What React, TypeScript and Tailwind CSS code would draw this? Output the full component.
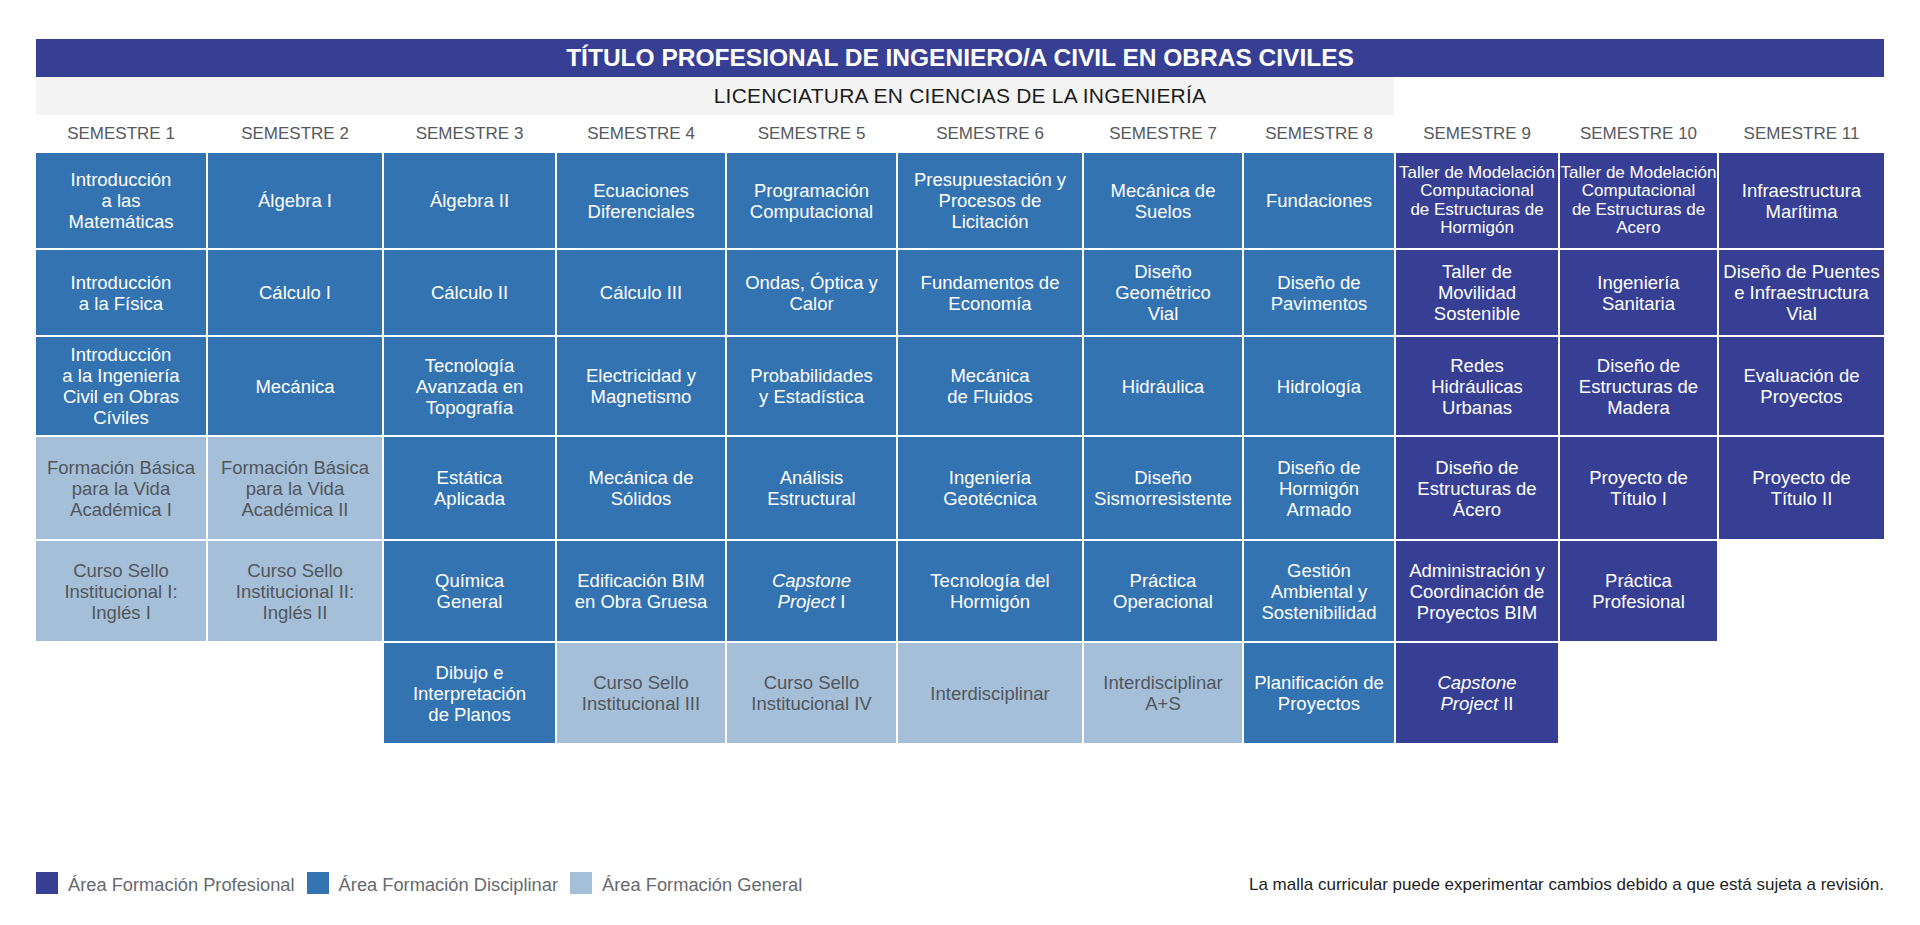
import React from 'react';

type Area = 'P' | 'D' | 'G';

type Course = {
  area: Area;
  lines: React.ReactNode[];
  small?: boolean;
} | null;

const AREA_BG: Record<Area, string> = {
  P: 'bg-[#363f94] text-white',
  D: 'bg-[#3373b2] text-white',
  G: 'bg-[#a5bfd8] text-[#51565c]',
};

const COLS =
  'grid-cols-[170px_174px_171px_168px_169px_184px_158px_150px_162px_157px_165px]';

const SEMESTERS = Array.from({ length: 11 }, (_, i) => `SEMESTRE ${i + 1}`);

const c = (area: Area, ...lines: React.ReactNode[]): Course => ({ area, lines });

// malla por filas, una entrada por semestre (null = celda vacía)
const ROWS: Course[][] = [
  [
    c('D', 'Introducción', 'a las', 'Matemáticas'),
    c('D', 'Álgebra I'),
    c('D', 'Álgebra II'),
    c('D', 'Ecuaciones', 'Diferenciales'),
    c('D', 'Programación', 'Computacional'),
    c('D', 'Presupuestación y', 'Procesos de', 'Licitación'),
    c('D', 'Mecánica de', 'Suelos'),
    c('D', 'Fundaciones'),
    { area: 'P', small: true, lines: ['Taller de Modelación', 'Computacional', 'de Estructuras de', 'Hormigón'] },
    { area: 'P', small: true, lines: ['Taller de Modelación', 'Computacional', 'de Estructuras de', 'Acero'] },
    c('P', 'Infraestructura', 'Marítima'),
  ],
  [
    c('D', 'Introducción', 'a la Física'),
    c('D', 'Cálculo I'),
    c('D', 'Cálculo II'),
    c('D', 'Cálculo III'),
    c('D', 'Ondas, Óptica y', 'Calor'),
    c('D', 'Fundamentos de', 'Economía'),
    c('D', 'Diseño', 'Geométrico', 'Vial'),
    c('D', 'Diseño de', 'Pavimentos'),
    c('P', 'Taller de', 'Movilidad', 'Sostenible'),
    c('P', 'Ingeniería', 'Sanitaria'),
    c('P', 'Diseño de Puentes', 'e Infraestructura', 'Vial'),
  ],
  [
    c('D', 'Introducción', 'a la Ingeniería', 'Civil en Obras', 'Cíviles'),
    c('D', 'Mecánica'),
    c('D', 'Tecnología', 'Avanzada en', 'Topografía'),
    c('D', 'Electricidad y', 'Magnetismo'),
    c('D', 'Probabilidades', 'y Estadística'),
    c('D', 'Mecánica', 'de Fluidos'),
    c('D', 'Hidráulica'),
    c('D', 'Hidrología'),
    c('P', 'Redes', 'Hidráulicas', 'Urbanas'),
    c('P', 'Diseño de', 'Estructuras de', 'Madera'),
    c('P', 'Evaluación de', 'Proyectos'),
  ],
  [
    c('G', 'Formación Básica', 'para la Vida', 'Académica I'),
    c('G', 'Formación Básica', 'para la Vida', 'Académica II'),
    c('D', 'Estática', 'Aplicada'),
    c('D', 'Mecánica de', 'Sólidos'),
    c('D', 'Análisis', 'Estructural'),
    c('D', 'Ingeniería', 'Geotécnica'),
    c('D', 'Diseño', 'Sismorresistente'),
    c('D', 'Diseño de', 'Hormigón', 'Armado'),
    c('P', 'Diseño de', 'Estructuras de', 'Ácero'),
    c('P', 'Proyecto de', 'Título I'),
    c('P', 'Proyecto de', 'Título II'),
  ],
  [
    c('G', 'Curso Sello', 'Institucional I:', 'Inglés I'),
    c('G', 'Curso Sello', 'Institucional II:', 'Inglés II'),
    c('D', 'Química', 'General'),
    c('D', 'Edificación BIM', 'en Obra Gruesa'),
    c('D', <em>Capstone</em>, <><em>Project</em> I</>),
    c('D', 'Tecnología del', 'Hormigón'),
    c('D', 'Práctica', 'Operacional'),
    c('D', 'Gestión', 'Ambiental y', 'Sostenibilidad'),
    c('P', 'Administración y', 'Coordinación de', 'Proyectos BIM'),
    c('P', 'Práctica', 'Profesional'),
    null,
  ],
  [
    null,
    null,
    c('D', 'Dibujo e', 'Interpretación', 'de Planos'),
    c('G', 'Curso Sello', 'Institucional III'),
    c('G', 'Curso Sello', 'Institucional IV'),
    c('G', 'Interdisciplinar'),
    c('G', 'Interdisciplinar', 'A+S'),
    c('D', 'Planificación de', 'Proyectos'),
    c('P', <em>Capstone</em>, <><em>Project</em> II</>),
    null,
    null,
  ],
];

function CourseCell({ course }: { course: Course }) {
  if (!course) return <div />;
  return (
    <div
      className={`flex flex-col items-center justify-center text-center whitespace-nowrap ${AREA_BG[course.area]} ${
        course.small ? 'text-[17px] leading-[18.5px]' : 'text-[18.5px] leading-[21px]'
      }`}
    >
      {course.lines.map((line, i) => (
        <span key={i}>{line}</span>
      ))}
    </div>
  );
}

function LegendItem({ color, label }: { color: string; label: string }) {
  return (
    <div className="flex items-center gap-[10px]">
      <span className={`w-[22px] h-[22px] ${color}`} />
      <span className="text-[18.3px] text-[#666a6e] pt-[4px]">{label}</span>
    </div>
  );
}

export default function App() {
  return (
    <div className="w-[1920px] h-[925px] bg-white px-[36px] pt-[39px] font-['Liberation_Sans',Arial,sans-serif]">
      {/* Título */}
      <div className="h-[38px] bg-[#363f94] flex items-center justify-center text-white font-bold text-[24.5px]">
        TÍTULO PROFESIONAL DE INGENIERO/A CIVIL EN OBRAS CIVILES
      </div>

      {/* Licenciatura */}
      <div className={`grid ${COLS} gap-x-[2px] h-[38px]`}>
        <div className="col-start-1 col-end-9 row-start-1 bg-[#f4f4f4]" />
        <div className="col-start-1 col-end-12 row-start-1 flex items-center justify-center text-[21px] tracking-[0.01em] text-[#1c1c1c]">
          LICENCIATURA EN CIENCIAS DE LA INGENIERÍA
        </div>
      </div>

      {/* Semestres */}
      <div className={`grid ${COLS} gap-x-[2px] h-[38px]`}>
        {SEMESTERS.map((s) => (
          <div key={s} className="flex items-center justify-center text-[17px] text-[#55585c]">
            {s}
          </div>
        ))}
      </div>

      {/* Malla */}
      <div className={`grid ${COLS} grid-rows-[95px_85px_98px_102px_100px_100px] gap-[2px]`}>
        {ROWS.flatMap((row, r) => row.map((course, i) => <CourseCell key={`${r}-${i}`} course={course} />))}
      </div>

      {/* Leyenda */}
      <div className="mt-[124px] flex items-center justify-between">
        <div className="flex items-center gap-[12px]">
          <LegendItem color="bg-[#363f94]" label="Área Formación Profesional" />
          <LegendItem color="bg-[#3373b2]" label="Área Formación Disciplinar" />
          <LegendItem color="bg-[#a5bfd8]" label="Área Formación General" />
        </div>
        <p className="text-[17px] text-[#222] pt-[4px]">
          La malla curricular puede experimentar cambios debido a que está sujeta a revisión.
        </p>
      </div>
    </div>
  );
}
